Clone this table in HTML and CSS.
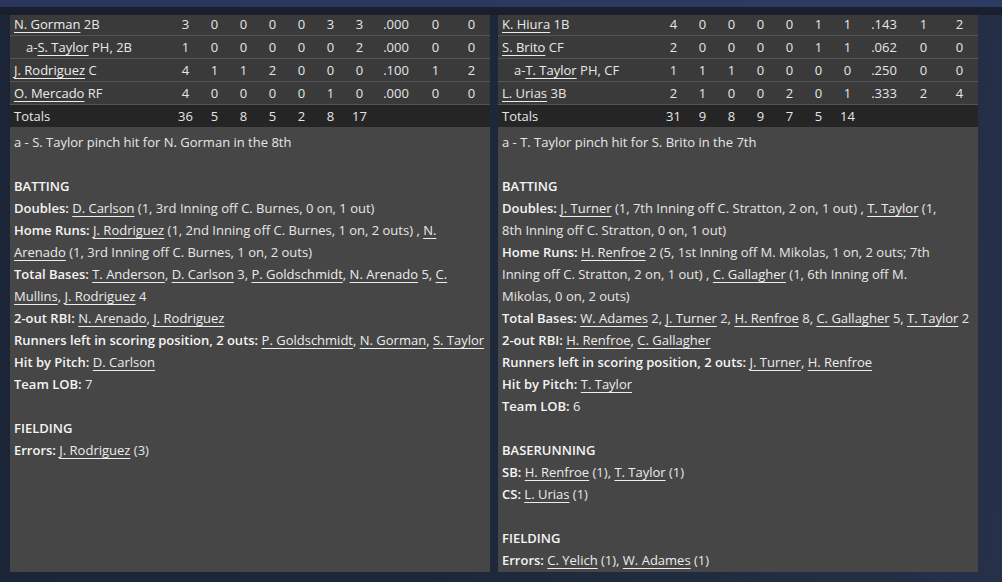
FILE: index.html
```html
<!DOCTYPE html>
<html>
<head>
<meta charset="utf-8">
<link rel="stylesheet" href="styles.css">
</head>
<body>
<div class="topbar"></div>
<div class="subbar"></div>
<div class="main">
  <section class="panel">
    <div class="box">
      <div class="row"><span class="name"><a>N. Gorman</a> 2B</span><span class="n">3</span><span class="n">0</span><span class="n">0</span><span class="n">0</span><span class="n">0</span><span class="n">3</span><span class="n">3</span><span class="n">.000</span><span class="n">0</span><span class="n">0</span></div>
      <div class="row"><span class="name sub">a-<a>S. Taylor</a> PH, 2B</span><span class="n">1</span><span class="n">0</span><span class="n">0</span><span class="n">0</span><span class="n">0</span><span class="n">0</span><span class="n">2</span><span class="n">.000</span><span class="n">0</span><span class="n">0</span></div>
      <div class="row"><span class="name"><a>J. Rodriguez</a> C</span><span class="n">4</span><span class="n">1</span><span class="n">1</span><span class="n">2</span><span class="n">0</span><span class="n">0</span><span class="n">0</span><span class="n">.100</span><span class="n">1</span><span class="n">2</span></div>
      <div class="row"><span class="name"><a>O. Mercado</a> RF</span><span class="n">4</span><span class="n">0</span><span class="n">0</span><span class="n">0</span><span class="n">0</span><span class="n">1</span><span class="n">0</span><span class="n">.000</span><span class="n">0</span><span class="n">0</span></div>
      <div class="row totals"><span class="name">Totals</span><span class="n">36</span><span class="n">5</span><span class="n">8</span><span class="n">5</span><span class="n">2</span><span class="n">8</span><span class="n">17</span></div>
      <div class="notes">
        <p>a - S. Taylor pinch hit for N. Gorman in the 8th</p>
        <p class="blank"></p>
        <p><b>BATTING</b></p>
        <p><b>Doubles:</b> <a>D. Carlson</a> (1, 3rd Inning off C. Burnes, 0 on, 1 out)</p>
        <p><b>Home Runs:</b> <a>J. Rodriguez</a> (1, 2nd Inning off C. Burnes, 1 on, 2 outs) , <a>N.</a><br><a>Arenado</a> (1, 3rd Inning off C. Burnes, 1 on, 2 outs)</p>
        <p><b>Total Bases:</b> <a>T. Anderson</a>, <a>D. Carlson</a> 3, <a>P. Goldschmidt</a>, <a>N. Arenado</a> 5, <a>C.</a><br><a>Mullins</a>, <a>J. Rodriguez</a> 4</p>
        <p><b>2-out RBI:</b> <a>N. Arenado</a>, <a>J. Rodriguez</a></p>
        <p><b>Runners left in scoring position, 2 outs:</b> <a>P. Goldschmidt</a>, <a>N. Gorman</a>, <a>S. Taylor</a></p>
        <p><b>Hit by Pitch:</b> <a>D. Carlson</a></p>
        <p><b>Team LOB:</b> 7</p>
        <p class="blank"></p>
        <p><b>FIELDING</b></p>
        <p><b>Errors:</b> <a>J. Rodriguez</a> (3)</p>
      </div>
    </div>
  </section>
  <section class="panel">
    <div class="box">
      <div class="row"><span class="name"><a>K. Hiura</a> 1B</span><span class="n">4</span><span class="n">0</span><span class="n">0</span><span class="n">0</span><span class="n">0</span><span class="n">1</span><span class="n">1</span><span class="n">.143</span><span class="n">1</span><span class="n">2</span></div>
      <div class="row"><span class="name"><a>S. Brito</a> CF</span><span class="n">2</span><span class="n">0</span><span class="n">0</span><span class="n">0</span><span class="n">0</span><span class="n">1</span><span class="n">1</span><span class="n">.062</span><span class="n">0</span><span class="n">0</span></div>
      <div class="row"><span class="name sub">a-<a>T. Taylor</a> PH, CF</span><span class="n">1</span><span class="n">1</span><span class="n">1</span><span class="n">0</span><span class="n">0</span><span class="n">0</span><span class="n">0</span><span class="n">.250</span><span class="n">0</span><span class="n">0</span></div>
      <div class="row"><span class="name"><a>L. Urias</a> 3B</span><span class="n">2</span><span class="n">1</span><span class="n">0</span><span class="n">0</span><span class="n">2</span><span class="n">0</span><span class="n">1</span><span class="n">.333</span><span class="n">2</span><span class="n">4</span></div>
      <div class="row totals"><span class="name">Totals</span><span class="n">31</span><span class="n">9</span><span class="n">8</span><span class="n">9</span><span class="n">7</span><span class="n">5</span><span class="n">14</span></div>
      <div class="notes">
        <p>a - T. Taylor pinch hit for S. Brito in the 7th</p>
        <p class="blank"></p>
        <p><b>BATTING</b></p>
        <p><b>Doubles:</b> <a>J. Turner</a> (1, 7th Inning off C. Stratton, 2 on, 1 out) , <a>T. Taylor</a> (1,<br>8th Inning off C. Stratton, 0 on, 1 out)</p>
        <p><b>Home Runs:</b> <a>H. Renfroe</a> 2 (5, 1st Inning off M. Mikolas, 1 on, 2 outs; 7th<br>Inning off C. Stratton, 2 on, 1 out) , <a>C. Gallagher</a> (1, 6th Inning off M.<br>Mikolas, 0 on, 2 outs)</p>
        <p><b>Total Bases:</b> <a>W. Adames</a> 2, <a>J. Turner</a> 2, <a>H. Renfroe</a> 8, <a>C. Gallagher</a> 5, <a>T. Taylor</a> 2</p>
        <p><b>2-out RBI:</b> <a>H. Renfroe</a>, <a>C. Gallagher</a></p>
        <p><b>Runners left in scoring position, 2 outs:</b> <a>J. Turner</a>, <a>H. Renfroe</a></p>
        <p><b>Hit by Pitch:</b> <a>T. Taylor</a></p>
        <p><b>Team LOB:</b> 6</p>
        <p class="blank"></p>
        <p><b>BASERUNNING</b></p>
        <p><b>SB:</b> <a>H. Renfroe</a> (1), <a>T. Taylor</a> (1)</p>
        <p><b>CS:</b> <a>L. Urias</a> (1)</p>
        <p class="blank"></p>
        <p><b>FIELDING</b></p>
        <p><b>Errors:</b> <a>C. Yelich</a> (1), <a>W. Adames</a> (1)</p>
      </div>
    </div>
  </section>
</div>
</body>
</html>
```

FILE: styles.css
```css
html, body {
  margin: 0;
  padding: 0;
}
body {
  width: 1002px;
  height: 582px;
  overflow: hidden;
  background: linear-gradient(100deg, #1c2538 0%, #1e2739 45%, #222c42 80%, #263049 100%);
  font-family: "Open Sans", "Liberation Sans", sans-serif;
  font-size: 13px;
  color: #e6e6e6;
}
.topbar {
  height: 7px;
  background: linear-gradient(90deg, #29355a, #2c3960 60%, #2e3b62);
}
.subbar {
  height: 8px;
  background: #191f2d;
}
.main {
  display: flex;
  gap: 8px;
  padding-left: 10px;
  height: 557px;
}
.panel {
  width: 480px;
  background: #464646;
  overflow: hidden;
}
.box {
  margin-top: -2px;
}
.row {
  display: grid;
  grid-template-columns: 161px repeat(7, 29px) 44px 35px 37px;
  height: 22px;
  align-items: center;
  background: #3a3a3a;
  border-bottom: 1px solid #545454;
}
.row .n {
  text-align: center;
}
.name {
  padding-left: 4px;
  white-space: nowrap;
}
.sub {
  padding-left: 16px;
}
.totals {
  background: #252525;
  border-bottom: 0;
}
.notes {
  padding: 4px 4px 0;
  line-height: 22px;
  white-space: nowrap;
}
.notes p {
  margin: 0;
}
.blank {
  height: 22px;
}
a {
  color: #ececec;
  text-decoration: underline;
  text-decoration-thickness: 1px;
  text-underline-offset: 3px;
}
b {
  font-weight: 600;
  color: #f4f4f4;
}
```
